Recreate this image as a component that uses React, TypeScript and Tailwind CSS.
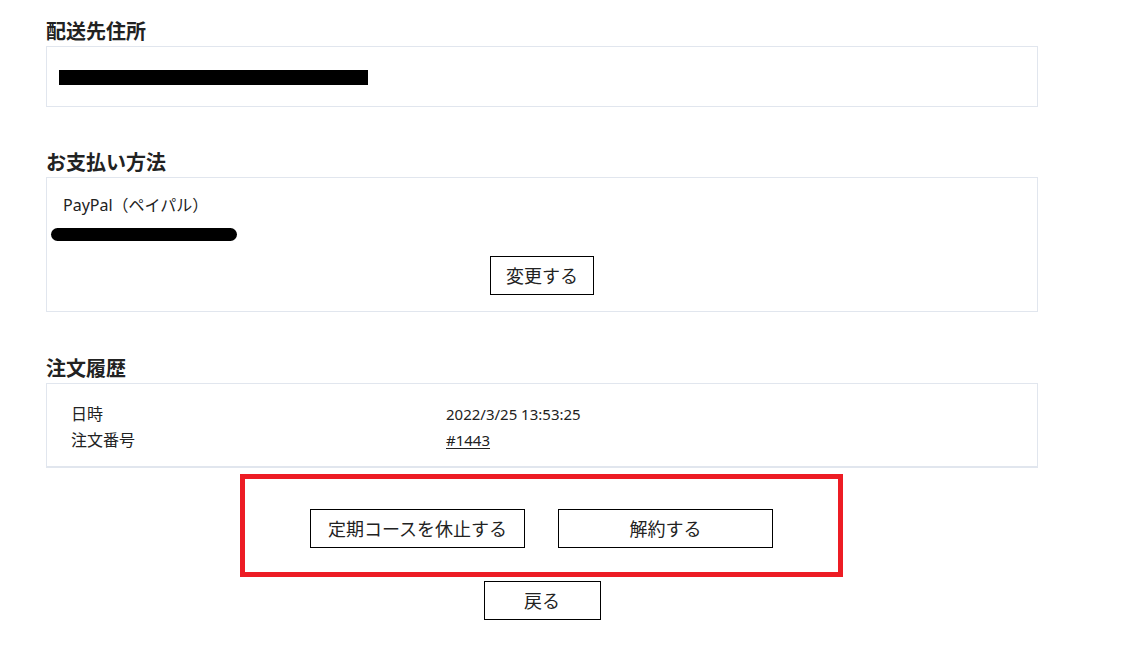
const font = { fontFamily: '"Noto Sans", "Noto Sans CJK JP", sans-serif' };

function Heading({ children }: { children: React.ReactNode }) {
  return <h2 className="text-[20px] leading-[28px] font-bold text-[#222]">{children}</h2>;
}

function OutlineButton({ label, className = "" }: { label: string; className?: string }) {
  return (
    <button className={`h-[39px] border border-black bg-white text-[18px] leading-none text-[#222] flex items-center justify-center ${className}`}>
      {label}
    </button>
  );
}

export default function App() {
  return (
    <div className="min-h-[653px] bg-white text-[#222]" style={font}>
      <div className="ml-[46px] w-[992px] pt-[18px]">
        {/* 配送先 */}
        <section>
          <Heading>配送先住所</Heading>
          <div className="border border-[#e1e6ee] pt-[18px] pb-[17px] pl-[12px]">
            <div className="h-[24px] flex items-center">
              <span className="block w-[309px] h-[15px] bg-black"></span>
            </div>
          </div>
        </section>

        {/* 支払い */}
        <section className="mt-[42px]">
          <Heading>お支払い方法</Heading>
          <div className="border border-[#e1e6ee] pt-[15px] pb-[16px] px-[4px]">
            <p className="pl-[12px] text-[16px] leading-[24px]">PayPal（ペイパル）</p>
            <div className="h-[24px] flex items-end">
              <span className="block w-[186px] h-[13px] rounded-full bg-black"></span>
            </div>
            <div className="mt-[15px] flex justify-center">
              <OutlineButton label="変更する" className="w-[104px]" />
            </div>
          </div>
        </section>

        {/* 注文履歴 */}
        <section className="mt-[43px]">
          <Heading>注文履歴</Heading>
          <div className="border border-[#e1e6ee] border-b-2 pt-[17px] pb-[13px] pl-[24px]">
            <div className="flex h-[26px] items-center">
              <span className="w-[375px] text-[16px]">日時</span>
              <span className="text-[15px]">2022/3/25 13:53:25</span>
            </div>
            <div className="flex h-[26px] items-center">
              <span className="w-[375px] text-[16px]">注文番号</span>
              <a href="#" className="text-[15px] underline underline-offset-2">#1443</a>
            </div>
          </div>

          <div className="ml-[194px] mt-[6px] w-[603px] h-[103px] border-[5px] border-[#ed1c24] pt-[30px] flex justify-center gap-[33px]">
            <OutlineButton label="定期コースを休止する" className="w-[215px]" />
            <OutlineButton label="解約する" className="w-[215px]" />
          </div>

          <div className="mt-[4px] flex justify-center">
            <OutlineButton label="戻る" className="w-[117px]" />
          </div>
        </section>
      </div>
    </div>
  );
}
